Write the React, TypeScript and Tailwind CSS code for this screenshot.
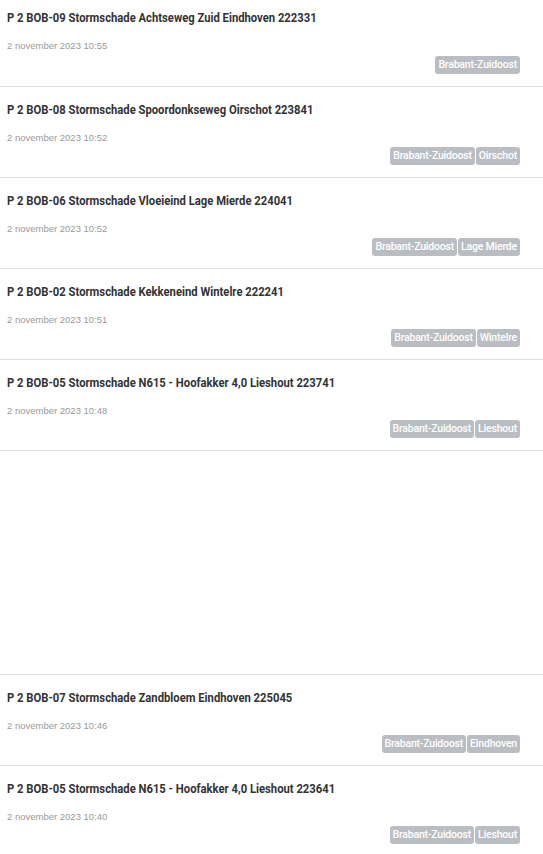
import React from "react";

type Item = { title: string; date: string; tags: string[] };

const items: Item[] = [
  { title: "P 2 BOB-09 Stormschade Achtseweg Zuid Eindhoven 222331", date: "2 november 2023 10:55", tags: ["Brabant-Zuidoost"] },
  { title: "P 2 BOB-08 Stormschade Spoordonkseweg Oirschot 223841", date: "2 november 2023 10:52", tags: ["Brabant-Zuidoost", "Oirschot"] },
  { title: "P 2 BOB-06 Stormschade Vloeieind Lage Mierde 224041", date: "2 november 2023 10:52", tags: ["Brabant-Zuidoost", "Lage Mierde"] },
  { title: "P 2 BOB-02 Stormschade Kekkeneind Wintelre 222241", date: "2 november 2023 10:51", tags: ["Brabant-Zuidoost", "Wintelre"] },
  { title: "P 2 BOB-05 Stormschade N615 - Hoofakker 4,0 Lieshout 223741", date: "2 november 2023 10:48", tags: ["Brabant-Zuidoost", "Lieshout"] },
];

const items2: Item[] = [
  { title: "P 2 BOB-07 Stormschade Zandbloem Eindhoven 225045", date: "2 november 2023 10:46", tags: ["Brabant-Zuidoost", "Eindhoven"] },
  { title: "P 2 BOB-05 Stormschade N615 - Hoofakker 4,0 Lieshout 223641", date: "2 november 2023 10:40", tags: ["Brabant-Zuidoost", "Lieshout"] },
];

function Row({ item, first }: { item: Item; first?: boolean }) {
  return (
    <div className={"pl-[7px] pr-[23px] pb-[12px] border-b border-[#dddddd] " + (first ? "pt-[9px]" : "pt-[14px]")}>
      <div className="block w-max whitespace-nowrap origin-left scale-x-[0.9] text-[12.5px] leading-[17px] font-bold text-[#333] font-['Roboto',sans-serif]">
        {item.title}
      </div>
      <div className="mt-[14px] text-[9.5px] leading-[12px] text-[#999] font-['Liberation_Sans',Arial,sans-serif]">
        {item.date}
      </div>
      <div className={"flex justify-end gap-[1px] " + (first ? "mt-[4px]" : "mt-[3px]")}>
        {item.tags.map((t) => (
          <span
            key={t}
            className="bg-[#babec2] text-white rounded-[3px] px-[3px] h-[18px] leading-[18px] text-[10.5px] font-medium font-['Roboto',sans-serif] tracking-[-0.2px]"
          >
            {t}
          </span>
        ))}
      </div>
    </div>
  );
}

export default function App() {
  return (
    <div className="w-[543px] bg-white">
      {items.map((it, i) => (
        <Row key={it.title} item={it} first={i === 0} />
      ))}
      <div className="h-[224px] border-b border-[#dddddd]" />
      {items2.map((it) => (
        <Row key={it.title} item={it} />
      ))}
    </div>
  );
}
